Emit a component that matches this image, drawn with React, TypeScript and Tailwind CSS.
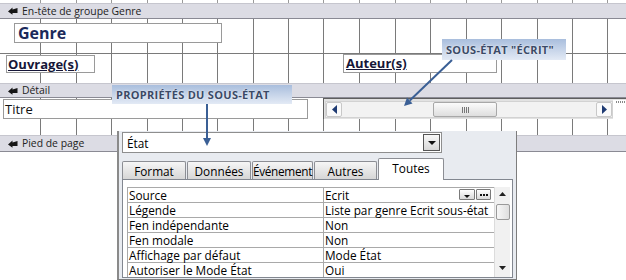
import React from "react";

const GRID_X = [40, 76, 111, 147, 182, 217, 253, 288, 323, 359, 395, 430, 466, 501, 537, 572, 607];

function Grid({ color = "#7a7a7a" }: { color?: string }) {
  return (
    <svg className="absolute inset-0 w-full h-full pointer-events-none" shapeRendering="crispEdges">
      {GRID_X.map((x) => (
        <line key={x} x1={x + 0.5} x2={x + 0.5} y1="0" y2="100%" stroke={color} strokeWidth="1" />
      ))}
    </svg>
  );
}

function SectionIcon() {
  return (
    <svg width="10" height="8" viewBox="0 0 10 8">
      <path d="M0 4.5 L4.5 0.5 L4.5 2.5 L9.5 1 L9.5 6 L4.5 6 L4.5 7.8 Z" fill="#151515" />
    </svg>
  );
}

function Band({ label, h }: { label: string; h: string }) {
  return (
    <div
      className={`${h} relative flex items-center gap-[4px] pl-[8px] bg-[#dcdce4] border-t border-t-[#c6c6ce] border-b border-b-[#8a8a94] text-[10.4px] text-[#222] leading-none`}
    >
      <SectionIcon />
      <span>{label}</span>
    </div>
  );
}

function Tri({ dir, color = "#1f3b73" }: { dir: "l" | "r" | "d" | "u"; color?: string }) {
  const d =
    dir === "l" ? "M5 0 L5 9 L0 4.5 Z" : dir === "r" ? "M0 0 L0 9 L5 4.5 Z" : dir === "d" ? "M0 0 L8 0 L4 4 Z" : "M0 4 L8 4 L4 0 Z";
  const w = dir === "l" || dir === "r" ? 5 : 8;
  const hh = dir === "l" || dir === "r" ? 9 : 4;
  return (
    <svg width={w} height={hh} viewBox={`0 0 ${w} ${hh}`}>
      <path d={d} fill={color} />
    </svg>
  );
}

const ROWS: [string, string][] = [
  ["Source", "Ecrit"],
  ["Légende", "Liste par genre Ecrit sous-état"],
  ["Fen indépendante", "Non"],
  ["Fen modale", "Non"],
  ["Affichage par défaut", "Mode État"],
  ["Autoriser le Mode État", "Oui"],
];

function PropertyPanel() {
  return (
    <div className="absolute left-[117px] top-[131px] w-[400px] h-[149px] bg-[#e8ebf0] border-l-2 border-l-[#8a8a8a] border-r border-r-[#7d7d7d] border-b border-b-[#7d7d7d] pl-[3px] pt-[1px] flex flex-col text-[11.8px] text-black">
      {/* combo */}
      <div className="w-[320px] h-[21px] bg-white border border-[#8e8e8e] flex items-center justify-between pl-[4px] pr-[1px]">
        <span className="leading-[16px]">État</span>
        <div className="w-[17px] h-[17px] border border-[#555] bg-[linear-gradient(#f8f8f8,#d8d8d8)] flex items-center justify-center">
          <Tri dir="d" color="#111" />
        </div>
      </div>
      {/* tabs */}
      <div className="flex items-end gap-[1px] mt-[5px] h-[21px] relative z-10">
        {[
          ["Format", "w-[64px]", ""],
          ["Données", "w-[64px]", ""],
          ["Événement", "w-[61px]", "tracking-[-0.3px]"],
          ["Autres", "w-[63px]", ""],
        ].map(([t, w, tr]) => (
          <div
            key={t}
            className={`${w} ${tr} h-[18px] border border-b-0 border-[#8c8e94] rounded-t-[2px] bg-[linear-gradient(#f6f6f6,#d6d6d6)] flex items-center justify-center leading-[16px] whitespace-nowrap`}
          >
            {t}
          </div>
        ))}
        <div className="w-[66px] h-[22px] -mb-[1px] border border-b-0 border-[#8c8e94] rounded-t-[2px] bg-white flex items-start pt-[1px] justify-center leading-[16px]">
          Toutes
        </div>
      </div>
      {/* table frame */}
      <div className="w-[391px] h-[99px] bg-white border border-[#828790] pt-[7px] pl-[4px] overflow-hidden flex">
        <div className="flex flex-col border-t border-l border-[#a9a9a9] w-[367px] h-[95px] overflow-hidden">
          {ROWS.map(([k, v], i) => (
            <div key={k} className="flex h-[15px] shrink-0 border-b border-[#a9a9a9] leading-[14px]">
              <div className="w-[196px] shrink-0 border-r border-[#a9a9a9] pl-[1px] whitespace-nowrap">{k}</div>
              <div className="flex-1 pl-[1px] flex items-start justify-between pr-[3px] whitespace-nowrap">
                <span>{v}</span>
                {i === 0 && (
                  <div className="flex gap-[1px] pt-[1px]">
                    <div className="w-[16px] h-[11px] border border-[#7a7a7a] rounded-[1px] bg-[linear-gradient(#ffffff,#d9d9d9)] flex items-end justify-center pb-[1px]">
                      <svg width="6" height="3" viewBox="0 0 6 3">
                        <path d="M0 0 L6 0 L3 3 Z" fill="#111" />
                      </svg>
                    </div>
                    <div className="w-[15px] h-[11px] border border-[#7a7a7a] rounded-[1px] bg-[linear-gradient(#ffffff,#d9d9d9)] flex items-center justify-center">
                      <svg width="8" height="2" viewBox="0 0 8 2">
                        <rect x="0" y="0" width="2" height="2" fill="#111" />
                        <rect x="3" y="0" width="2" height="2" fill="#111" />
                        <rect x="6" y="0" width="2" height="2" fill="#111" />
                      </svg>
                    </div>
                  </div>
                )}
              </div>
            </div>
          ))}
        </div>
        <div className="w-[16px] h-[95px] bg-[#f1f1f1] border-l border-[#dcdcdc] flex flex-col items-center pt-[5px]">
          <svg width="7" height="4" viewBox="0 0 7 4">
            <path d="M0 4 L7 4 L3.5 0 Z" fill="#222" />
          </svg>
          <div className="mt-[8px] w-[14px] h-[16px] border border-[#999] rounded-[2px] bg-[linear-gradient(to_right,#f7f7f7,#dedede)]" />
          <div className="mt-auto mb-[12px]">
            <svg width="7" height="4" viewBox="0 0 7 4">
              <path d="M0 0 L7 0 L3.5 4 Z" fill="#222" />
            </svg>
          </div>
        </div>
      </div>
    </div>
  );
}

function HScroll() {
  return (
    <div className="absolute left-[323px] top-0 w-[303px] h-[21px] border-t border-l border-[#5e5e5e] bg-[#e2e2e2] flex items-center pl-[1px] pt-[1px]">
      <div className="w-[288px] h-[17px] bg-[#f4f4f4] border border-[#d2d2d2] flex items-center">
        <div className="w-[16px] h-[15px] border border-[#c8c8c8] rounded-[2px] bg-[#fafafa] flex items-center justify-center">
          <Tri dir="l" />
        </div>
        <div className="w-[91px] h-[15px] bg-[#f2f2f2]" />
        <div className="w-[64px] h-[15px] border border-[#a8a8a8] rounded-[2px] bg-[linear-gradient(#fbfbfb,#dedede)] flex items-center justify-center gap-[1px]">
          {[0, 1, 2, 3].map((i) => (
            <div key={i} className="w-[1px] h-[6px] bg-[#777]" />
          ))}
        </div>
        <div className="flex-1 h-[15px] bg-[#f2f2f2]" />
        <div className="w-[16px] h-[15px] border border-[#c8c8c8] rounded-[2px] bg-[#fafafa] flex items-center justify-center">
          <Tri dir="r" />
        </div>
      </div>
      <div className="flex-1 h-full bg-white relative">
        <div className="absolute top-[1px] left-[3px] w-[9px] h-[2px] border-y border-dotted border-[#888]" />
      </div>
    </div>
  );
}

function Callout({ text, cls }: { text: string; cls: string }) {
  return (
    <div
      className={`absolute ${cls} bg-[linear-gradient(#a9bedd,#e3eaf5)] flex items-center pl-[4px] text-[11px] font-bold tracking-[0.3px] text-[#3b4a66] leading-none [text-shadow:0_0_2px_#ffffff]`}
    >
      {text}
    </div>
  );
}

export default function App() {
  return (
    <div className="relative w-[626px] h-[280px] overflow-hidden bg-white font-['Open_Sans',sans-serif]">
      {/* ruler */}
      <div className="relative h-[3px]">
        <Grid color="#9a9a9a" />
      </div>
      <Band label="En-tête de groupe Genre" h="h-[16px]" />
      {/* group header body */}
      <div className="relative h-[64px]">
        <Grid />
        <div className="h-[35px] border-b border-[#7a7a7a]" />
        <div className="absolute left-[14px] top-[4px] w-[208px] h-[20px] border border-[#9a9a9a] bg-white flex items-center pl-[3px] text-[16px] font-bold text-[#1b2a5a] leading-none">
          Genre
        </div>
        <div className="absolute left-[6px] top-[36px] w-[89px] h-[18px] border border-[#9a9a9a] bg-white flex items-center pl-[1px] text-[13px] font-bold text-[#161638] underline leading-none">
          Ouvrage(s)
        </div>
        <div className="absolute left-[343px] top-[35px] w-[154px] h-[19px] border border-[#9a9a9a] bg-white flex items-center pl-[2px] text-[13px] font-bold text-[#161638] underline leading-none">
          Auteur(s)
        </div>
      </div>
      <Band label="Détail" h="h-[15px]" />
      {/* detail body */}
      <div className="relative h-[37px]">
        <Grid />
        <div className="absolute left-[3px] top-[1px] w-[305px] h-[20px] border border-[#9a9a9a] bg-white flex items-center pl-[1px] text-[13px] text-[#111] leading-none">
          Titre
        </div>
        <HScroll />
      </div>
      <Band label="Pied de page" h="h-[17px]" />

      <PropertyPanel />

      <Callout text="PROPRIÉTÉS DU SOUS-ÉTAT" cls="left-[112px] top-[85px] w-[180px] h-[19px]" />
      <Callout text={'SOUS-ÉTAT "ÉCRIT"'} cls="left-[442px] top-[39px] w-[124px] h-[21px]" />

      <svg className="absolute inset-0 pointer-events-none" width="626" height="280">
        <line x1="452" y1="60" x2="409.8" y2="100.5" stroke="#3a5f95" strokeWidth="2" />
        <path d="M404 106 L412.5 103.4 L407 97.6 Z" fill="#3a5f95" />
        <line x1="207" y1="104" x2="207" y2="139" stroke="#3a5f95" strokeWidth="2" />
        <path d="M207 146 L203 138 L211 138 Z" fill="#3a5f95" />
      </svg>
    </div>
  );
}
